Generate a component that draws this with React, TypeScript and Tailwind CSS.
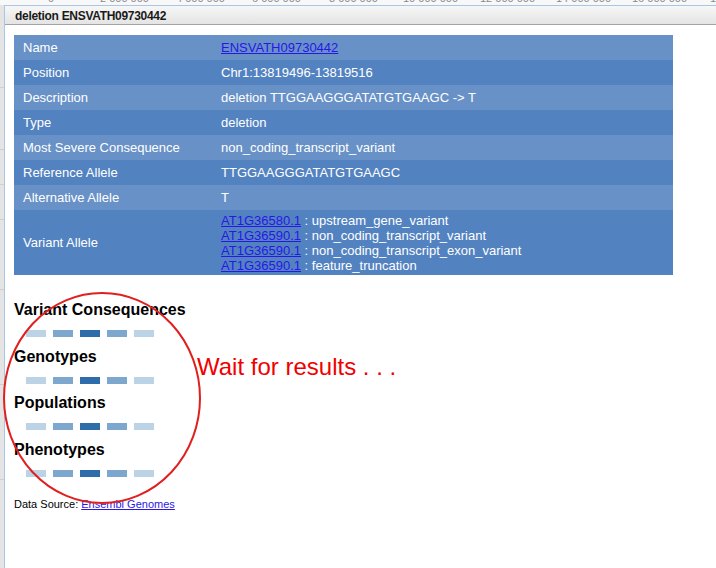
const scale = [
  { label: '0', w: 'w-[52px]' },
  { label: '2 000 000', w: 'w-[76px]' },
  { label: '4 000 000', w: 'w-[76px]' },
  { label: '6 000 000', w: 'w-[77px]' },
  { label: '8 000 000', w: 'w-[74px]' },
  { label: '10 000 000', w: 'w-[77px]' },
  { label: '12 000 000', w: 'w-[76px]' },
  { label: '14 000 000', w: 'w-[76px]' },
  { label: '16 000 000', w: 'w-[78px]' },
  { label: '18 000 000', w: 'w-[76px]' },
];

const rows: { name: string; value: string; link?: boolean }[] = [
  { name: 'Name', value: 'ENSVATH09730442', link: true },
  { name: 'Position', value: 'Chr1:13819496-13819516' },
  { name: 'Description', value: 'deletion TTGGAAGGGATATGTGAAGC -> T' },
  { name: 'Type', value: 'deletion' },
  { name: 'Most Severe Consequence', value: 'non_coding_transcript_variant' },
  { name: 'Reference Allele', value: 'TTGGAAGGGATATGTGAAGC' },
  { name: 'Alternative Allele', value: 'T' },
];

const alleles = [
  ['AT1G36580.1', 'upstream_gene_variant'],
  ['AT1G36590.1', 'non_coding_transcript_variant'],
  ['AT1G36590.1', 'non_coding_transcript_exon_variant'],
  ['AT1G36590.1', 'feature_truncation'],
];

const sections = ['Variant Consequences', 'Genotypes', 'Populations', 'Phenotypes'];

const Loader = () => (
  <div className="flex gap-[7px] pl-[12px] mt-[10px] h-[7px]">
    <div className="w-[20px] bg-[#bcd3e6]" />
    <div className="w-[20px] bg-[#7ea7cd]" />
    <div className="w-[20px] bg-[#2f6caa]" />
    <div className="w-[20px] bg-[#7ea7cd]" />
    <div className="w-[20px] bg-[#bcd3e6]" />
  </div>
);

const App = () => {
  return (
    <div className="w-[716px] h-[568px] overflow-hidden bg-white flex flex-col font-['Liberation_Sans',Arial,sans-serif]">
      {/* ruler of the genome browser behind the dialog */}
      <div className="h-[5px] flex overflow-hidden bg-[#f8f8f8] pl-[48px]">
        {scale.map((s) => (
          <div key={s.label} className={`${s.w} shrink-0 -mt-[8px] text-[11px] leading-[13px] text-[#8a8a8a] whitespace-nowrap`}>
            {s.label}
          </div>
        ))}
      </div>

      <div className="flex flex-1 min-h-0">
        <div className="w-[4px] bg-[#e4e4e4] flex flex-col">
          <div className="h-[83px] border-b border-[#cfcfcf]" />
          <div className="h-[62px] border-b border-[#cfcfcf]" />
          <div className="h-[35px] border-b border-[#cfcfcf]" />
          <div className="h-[35px] border-b border-[#cfcfcf]" />
          <div className="h-[70px] border-b border-[#cfcfcf]" />
          <div className="h-[95px] border-b border-[#cfcfcf]" />
          <div className="h-[95px] border-b border-[#cfcfcf]" />
        </div>

        <div className="flex-1 flex flex-col border-l border-t border-[#a9c6e6] bg-white relative">
          <div className="h-[19px] bg-gradient-to-b from-[#f7f7f7] to-[#e4e4e4] border-b border-[#a3a3a3] flex items-center pl-[10px] pt-[2px]">
            <span className="text-[12px] font-bold text-[#1a1a1a] tracking-[-0.3px]">
              deletion ENSVATH09730442
            </span>
          </div>

          <div className="pl-[9px] pt-[10px]">
            <table className="w-[659px] text-[13px] text-white border-collapse">
              <tbody>
                {rows.map((r, i) => (
                  <tr key={r.name} className={i % 2 === 0 ? 'bg-[#6891c7]' : 'bg-[#5382c1]'}>
                    <td className="h-[25px] w-[207px] pl-[9px] p-0 leading-[15px]">{r.name}</td>
                    <td className="h-[25px] p-0 leading-[15px]">
                      {r.link ? <span className="text-[#2a17e6] underline">{r.value}</span> : r.value}
                    </td>
                  </tr>
                ))}
                <tr className="bg-[#5382c1]">
                  <td className="h-[65px] pl-[9px] p-0">Variant Allele</td>
                  <td className="h-[65px] p-0 leading-[15px]">
                    {alleles.map(([id, c], i) => (
                      <div key={i}>
                        <span className="text-[#2a17e6] underline">{id}</span> : {c}
                      </div>
                    ))}
                  </td>
                </tr>
              </tbody>
            </table>
          </div>

          <div className="pl-[9px] mt-[25px] flex flex-col gap-[9.5px]">
            {sections.map((s) => (
              <div key={s}>
                <div className="text-[16px] leading-[20px] font-bold text-black">{s}</div>
                <Loader />
              </div>
            ))}
          </div>

          <div className="pl-[9px] mt-[21px] text-[11px] leading-[13px] text-black">
            Data Source: <span className="text-[#2a17e6] underline">Ensembl Genomes</span>
          </div>

          {/* annotation drawn over the dialog */}
          <svg className="absolute left-[-4px] top-[282px]" width="204" height="218" viewBox="0 0 204 218">
            <ellipse cx="101" cy="110" rx="98" ry="105" fill="none" stroke="#e0201f" strokeWidth="2" />
          </svg>
          <div className="absolute left-[192px] top-[347px] text-[24px] leading-[28px] text-[#f00000] whitespace-nowrap">
            Wait for results . . .
          </div>
        </div>
      </div>
    </div>
  );
};

export default App;
